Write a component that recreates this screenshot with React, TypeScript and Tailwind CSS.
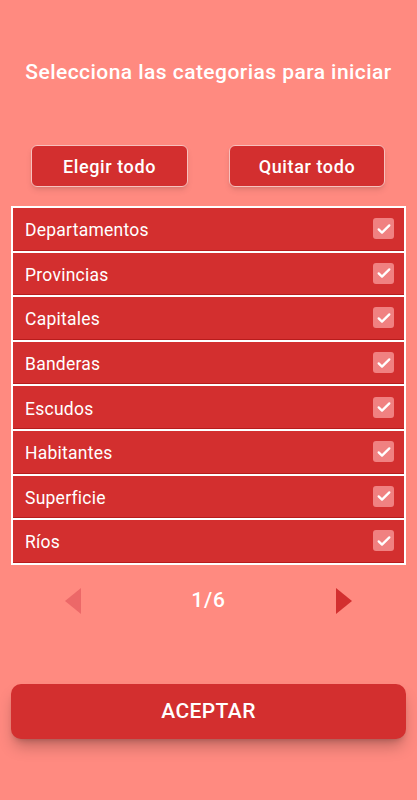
import { useState } from "react";

const categories = [
  "Departamentos",
  "Provincias",
  "Capitales",
  "Banderas",
  "Escudos",
  "Habitantes",
  "Superficie",
  "Ríos",
];

function CheckBox({ checked }: { checked: boolean }) {
  return (
    <div className="w-[21px] h-[21px] rounded-[3px] bg-[#f08181] flex items-center justify-center">
      {checked && (
        <svg width="16" height="16" viewBox="0 0 24 24" fill="none">
          <path d="M4 12.5l5 5L20 6.5" stroke="white" strokeWidth="3.4" strokeLinecap="round" strokeLinejoin="round" />
        </svg>
      )}
    </div>
  );
}

export default function App() {
  const [selected, setSelected] = useState<boolean[]>(categories.map(() => true));

  const toggle = (i: number) => {
    setSelected(selected.map((s, idx) => (idx === i ? !s : s)));
  };

  return (
    <div
      className="h-[800px] bg-[#ff8a80] flex flex-col px-[11px] text-white"
      style={{ fontFamily: "Roboto, 'Noto Sans', sans-serif" }}
    >
      <h1 className="mt-[58px] h-[28px] text-center text-[21px] leading-[28px] tracking-[0.45px] font-medium whitespace-nowrap">
        Selecciona las categorias para iniciar
      </h1>

      <div className="mt-[59px] flex pl-[20px] gap-[41px]">
        <button
          className="w-[157px] h-[42px] rounded-[6px] bg-[#d32f2f] border border-[#f7c1bd] shadow-md text-[18px] tracking-[0.6px] font-medium"
          onClick={() => setSelected(categories.map(() => true))}
        >
          Elegir todo
        </button>
        <button
          className="w-[156px] h-[42px] rounded-[6px] bg-[#d32f2f] border border-[#f7c1bd] shadow-md text-[18px] tracking-[0.6px] font-medium"
          onClick={() => setSelected(categories.map(() => false))}
        >
          Quitar todo
        </button>
      </div>

      <div className="mt-[19px] border-2 border-white bg-white flex flex-col gap-[2px]">
        {categories.map((c, i) => (
          <div
            key={c}
            className="h-[42.6px] bg-[#d32f2f] border-b border-[#b71c1c] flex items-center justify-between pl-[12px] pr-[10px] cursor-pointer"
            onClick={() => toggle(i)}
          >
            <span className="text-[17.5px] tracking-[0.25px] pt-[3px]">{c}</span>
            <CheckBox checked={selected[i]} />
          </div>
        ))}
      </div>

      <div className="mt-[23px] h-[26px] flex items-center">
        <div className="ml-[54px] w-0 h-0 border-y-[13px] border-y-transparent border-r-[16px] border-r-[#ec6868]" />
        <span className="flex-1 text-center text-[21px] tracking-[0.8px] font-medium">1/6</span>
        <div className="mr-[54px] w-0 h-0 border-y-[13px] border-y-transparent border-l-[16px] border-l-[#d32f2f]" />
      </div>

      <button className="mt-[70px] h-[55px] rounded-[10px] bg-[#d32f2f] shadow-lg shadow-[#00000040] text-[21px] tracking-[0.4px] font-medium">
        ACEPTAR
      </button>
    </div>
  );
}
